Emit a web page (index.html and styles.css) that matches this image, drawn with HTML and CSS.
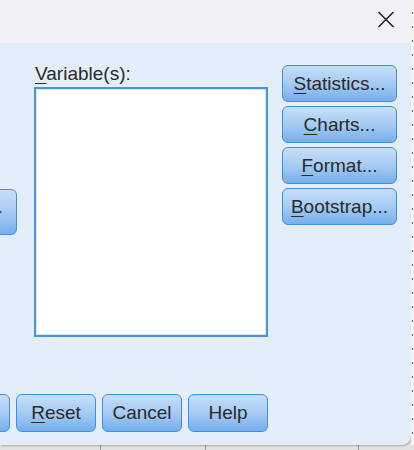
FILE: index.html
```html
<!DOCTYPE html>
<html>
<head>
<meta charset="utf-8">
<link rel="stylesheet" href="styles.css">
</head>
<body>
<div class="page">
  <div class="dialog">
    <div class="titlebar">
      <svg class="close" width="18" height="17" viewBox="0 0 18 17"><path d="M1.5 1 L16.5 16 M16.5 1 L1.5 16" stroke="#1f1f1f" stroke-width="1.5" fill="none"/></svg>
    </div>
    <div class="content">
      <div class="arrowcol">
        <div class="btn arrowbtn"><span class="arrow"></span></div>
      </div>
      <div class="varcol">
        <div class="label"><u>V</u>ariable(s):</div>
        <div class="listbox"></div>
      </div>
      <div class="sidecol">
        <div class="btn side"><u>S</u>tatistics...</div>
        <div class="btn side"><u>C</u>harts...</div>
        <div class="btn side"><u>F</u>ormat...</div>
        <div class="btn side"><u>B</u>ootstrap...</div>
      </div>
    </div>
    <div class="footer">
      <div class="btn foot partial"></div>
      <div class="btn foot"><u>R</u>eset</div>
      <div class="btn foot">Cancel</div>
      <div class="btn foot">Help</div>
    </div>
  </div>
  <div class="rightstrip"></div>
</div>
<div class="bottomstrip"></div>
</body>
</html>
```
FILE: styles.css
```css
html, body {
  margin: 0;
  padding: 0;
}
body {
  width: 414px;
  height: 450px;
  overflow: hidden;
  background: #e6e6e6;
  font-family: "Liberation Sans", Arial, sans-serif;
  font-size: 19px;
  color: #2a2a2a;
}
.page {
  display: flex;
  height: 445px;
}
.dialog {
  width: 411px;
  height: 445px;
  background: #e3eefa;
  border-bottom-right-radius: 9px;
  overflow: hidden;
  display: flex;
  flex-direction: column;
  box-shadow: 1px 1px 2px rgba(0,0,0,0.25);
}
.titlebar {
  height: 43px;
  flex: none;
  background: #f2f1f6;
  display: flex;
  justify-content: flex-end;
  align-items: flex-start;
  padding-right: 16px;
  box-sizing: border-box;
}
.close {
  margin-top: 11px;
}
.content {
  display: flex;
  margin-left: -30px;
}
.arrowcol {
  width: 47px;
  padding-top: 146px;
  margin-right: 17px;
}
.arrowbtn {
  width: 47px;
  height: 46px;
  box-sizing: border-box;
  display: flex;
  align-items: center;
  justify-content: flex-end;
  padding-right: 14px;
}
.arrow {
  width: 0;
  height: 0;
  border-top: 5px solid transparent;
  border-bottom: 5px solid transparent;
  border-left: 6px solid #6a3fc2;
}
.varcol {
  padding-top: 20px;
  width: 234px;
  margin-right: 14px;
}
.label {
  line-height: 22px;
  height: 22px;
  padding-left: 1px;
}
.listbox {
  margin-top: 2px;
  width: 234px;
  height: 250px;
  box-sizing: border-box;
  background: #ffffff;
  border: 2px solid #4f92dc;
  box-shadow: inset 0 0 0 1px #d6e7f8;
}
.sidecol {
  padding-top: 22px;
  display: flex;
  flex-direction: column;
  gap: 4px;
}
.btn {
  box-sizing: border-box;
  border: 1.5px solid #3f8fe2;
  border-radius: 6px;
  background: linear-gradient(to bottom, #c6dff9 0%, #a6cbf3 50%, #74b0ed 100%);
  color: #2a2a2a;
}
.side {
  width: 115px;
  height: 37px;
  display: flex;
  align-items: center;
  justify-content: center;
  line-height: 1;
}
.footer {
  margin-top: 57px;
  display: flex;
  gap: 6px;
  margin-left: -70px;
}
.foot {
  width: 80px;
  height: 38px;
  display: flex;
  align-items: center;
  justify-content: center;
}
u {
  text-underline-offset: 3px;
  text-decoration-thickness: 1px;
}
.rightstrip {
  flex: 1;
  background-color: #f4f4f4;
  background-image: repeating-linear-gradient(to bottom, transparent 0, transparent 12px, #555 12px, #555 14px);
  background-size: 1px 100%;
  background-repeat: no-repeat;
  background-position: 1px 0;
}
.bottomstrip {
  height: 5px;
  background-color: #e2e2e2;
  background-image:
    linear-gradient(#9a9a9a, #9a9a9a),
    linear-gradient(#9a9a9a, #9a9a9a),
    linear-gradient(#9a9a9a, #9a9a9a);
  background-size: 1px 5px, 1px 5px, 1px 5px;
  background-position: 100px 0, 205px 0, 358px 0;
  background-repeat: no-repeat;
}
```
